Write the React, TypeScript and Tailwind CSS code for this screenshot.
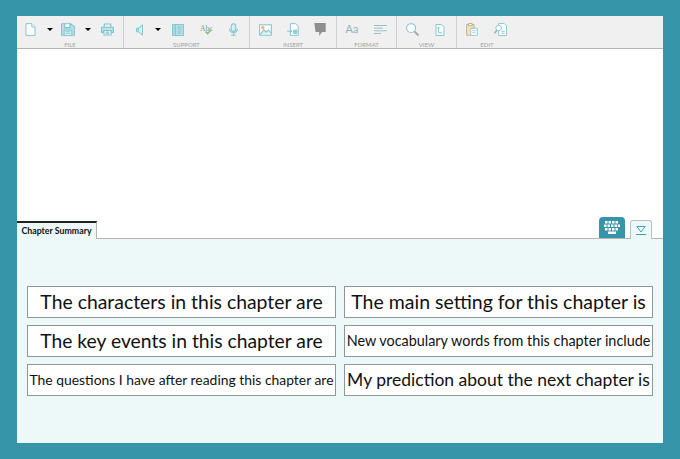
import React from 'react';

const line = '#7fc5d0';

function DocIcon() {
  return (
    <svg width="11" height="13" viewBox="0 0 16 20" fill="#fff" stroke={line} strokeWidth="1.5">
      <path d="M1 1h9l5 5v13H1z" />
      <path d="M10 1v5h5" />
    </svg>
  );
}

function SaveIcon() {
  return (
    <svg width="14" height="13" viewBox="0 0 22 20" fill="none" stroke={line} strokeWidth="1.7">
      <path d="M1 1h5v6h8V1h1l6 4.500V19H1z" fill="#bfe2e8" />
      <rect x="5" y="11" width="12" height="8" fill="#fff" />
      <path d="M7 13.500h8M7 16h8" />
      <path d="M6 1h8v6H6z" fill="#fff" />
    </svg>
  );
}

function PrintIcon() {
  return (
    <svg width="13" height="13" viewBox="0 0 20 20" fill="none" stroke={line} strokeWidth="1.8">
      <path d="M5 6V1.500h10V6" />
      <path d="M1 6.500h18v8h-3.500v-3h-11v3H1z" fill="#bfe2e8" />
      <path d="M4.500 11.500h11v7h-11z" fill="#fff" />
      <path d="M7 14h6M7 16.500h6" />
    </svg>
  );
}

function SpeakerIcon() {
  return (
    <svg width="9" height="12" viewBox="0 0 12 20" fill="#d8eef1" stroke={line} strokeWidth="1.6">
      <path d="M1 7h3v6H1z" />
      <path d="M4 7l7-5.500v17L4 13z" />
    </svg>
  );
}

function BookIcon() {
  return (
    <svg width="12" height="12" viewBox="0 0 20 20" fill="#bfe2e8" stroke={line} strokeWidth="1.7">
      <rect x="1" y="1" width="18" height="18" />
      <path d="M6 1v18" />
      <path d="M9 5h7M9 8.300h7M9 11.600h7M9 15h7M2.500 5h2M2.500 8.300h2M2.500 11.600h2M2.500 15h2" fill="none" />
    </svg>
  );
}

function SpellIcon() {
  return (
    <svg width="13" height="11" viewBox="0 0 13 11" fill="none">
      <text x="0" y="6.500" fontFamily="Liberation Serif, serif" fontSize="7.500" fill="#6f9ea3">Abc</text>
      <path d="M5.500 7.500l2 2 4-4" stroke="#86c46b" strokeWidth="1.600" />
    </svg>
  );
}

function MicIcon() {
  return (
    <svg width="9" height="13" viewBox="0 0 14 20" fill="#d8eef1" stroke={line} strokeWidth="1.6">
      <rect x="3.500" y="1" width="7" height="12" rx="3.500" />
      <path d="M1 9c0 8 12 8 12 0M7 15.500v3.500M3.500 19h7" fill="none" />
    </svg>
  );
}

function ImageIcon() {
  return (
    <svg width="13" height="12" viewBox="0 0 20 18" fill="#fff" stroke={line} strokeWidth="1.600">
      <rect x="1" y="1" width="18" height="16" />
      <path d="M1.500 16l6-7 4 3 3-3 4.500 5" fill="#d8eef1" />
      <circle cx="6" cy="5.500" r="1.800" fill="#f1d98a" stroke="#d9b95c" />
    </svg>
  );
}

function InsertIcon() {
  return (
    <svg width="12" height="13" viewBox="0 0 18 20" fill="#fff" stroke={line} strokeWidth="1.500">
      <path d="M5 1h8l4 4v14H5z" />
      <path d="M10 11h5v5h-5zM10 13.500h5M12.500 11v5" fill="#d8eef1" />
      <path d="M0 12.500h7M5 10.500l2 2-2 2" fill="none" />
    </svg>
  );
}

function CommentIcon() {
  return (
    <svg width="12" height="13" viewBox="0 0 14 16" fill="#8f8f8f">
      <path d="M0 0h14v11H9.500L6 16v-5H1.500z" />
    </svg>
  );
}

function LinesIcon() {
  return (
    <svg width="13" height="9" viewBox="0 0 13 9" fill="none" stroke="#9dc3c9" strokeWidth="1">
      <path d="M0 .5h13M0 3.200h9M0 5.800h13M0 8.500h7" />
    </svg>
  );
}

function SearchIcon() {
  return (
    <svg width="13" height="13" viewBox="0 0 14 14" fill="#fff" stroke={line} strokeWidth="1.100">
      <circle cx="5.500" cy="5.500" r="4.800" />
      <path d="M9 9l4.500 4.500" stroke="#a9a9a9" strokeWidth="2.100" />
    </svg>
  );
}

function PageIcon() {
  return (
    <svg width="10" height="12" viewBox="0 0 12 15" fill="#fff" stroke={line} strokeWidth="1.200">
      <path d="M1 .6h7l3 3v10.800H1z" />
      <path d="M4 4v7h5M2.500 5.500L4 4l1.500 1.500" fill="none" />
    </svg>
  );
}

function ClipboardIcon() {
  return (
    <svg width="12" height="13" viewBox="0 0 14 16" fill="#f3e2bd" stroke="#b7a67e" strokeWidth="1">
      <rect x=".5" y="2" width="9" height="13" />
      <rect x="3" y=".5" width="4" height="3" fill="#fff" />
      <path d="M5.500 6.500h8v9h-8z" fill="#fff" stroke={line} />
      <path d="M7.500 9.500h4M7.500 12h4" fill="none" stroke={line} />
    </svg>
  );
}

function ReplaceIcon() {
  return (
    <svg width="13" height="13" viewBox="0 0 14 14" fill="#fff" stroke={line} strokeWidth="1">
      <path d="M5 .5h6L13.500 3v10.500H5z" />
      <circle cx="5" cy="5.500" r="3" />
      <path d="M3 8L.5 11" stroke="#a9a9a9" strokeWidth="1.600" />
      <path d="M8 9h3.500M8 11h3.500" />
    </svg>
  );
}

function Caret() {
  return <span className="block w-0 h-0 border-x-[3px] border-x-transparent border-t-[3px] border-t-black" />;
}

function Slot({ className, children }: { className: string; children: React.ReactNode }) {
  return <div className={`flex items-center justify-center h-full ${className}`}>{children}</div>;
}

function Group({ label, className, children }: { label: string; className: string; children: React.ReactNode }) {
  return (
    <div className={`flex flex-col h-full border-r border-[#cfcfcf] ${className}`}>
      <div className="flex h-[26px] pt-[1px]">{children}</div>
      <div className="text-center text-[6px] leading-[6px] text-[#a3a3a3]">{label}</div>
    </div>
  );
}

function Prompt({ size, children }: { size: string; children: React.ReactNode }) {
  return (
    <div className={`h-[32px] flex items-center justify-center bg-white border border-[#8f9696] text-[#111] whitespace-nowrap ${size}`}>
      {children}
    </div>
  );
}

export default function App() {
  return (
    <div className="w-[680px] h-[459px] bg-[#3795aa] pt-[16px] px-[17px] overflow-hidden" style={{ fontFamily: 'Lato, "Open Sans", sans-serif' }}>
      <div className="w-[646px] h-[427px] flex flex-col bg-white">
        {/* Toolbar */}
        <div className="flex h-[33px] shrink-0 bg-[#f0f0f0] border-b border-[#b4b4b4]">
          <Group label="FILE" className="w-[107px]">
            <Slot className="w-[26px]"><DocIcon /></Slot>
            <Slot className="w-[14px]"><Caret /></Slot>
            <Slot className="w-[22px]"><SaveIcon /></Slot>
            <Slot className="w-[18px]"><Caret /></Slot>
            <Slot className="w-[20px]"><PrintIcon /></Slot>
          </Group>
          <Group label="SUPPORT" className="w-[126px]">
            <Slot className="w-[30px]"><SpeakerIcon /></Slot>
            <Slot className="w-[8px]"><Caret /></Slot>
            <Slot className="w-[32px]"><BookIcon /></Slot>
            <Slot className="w-[24px]"><SpellIcon /></Slot>
            <Slot className="w-[30px]"><MicIcon /></Slot>
          </Group>
          <Group label="INSERT" className="w-[87px]">
            <Slot className="w-[30px]"><ImageIcon /></Slot>
            <Slot className="w-[26px]"><InsertIcon /></Slot>
            <Slot className="w-[28px]"><CommentIcon /></Slot>
          </Group>
          <Group label="FORMAT" className="w-[60px]">
            <Slot className="w-[30px]"><span className="text-[11px] text-[#8fb4bb]">Aa</span></Slot>
            <Slot className="w-[26px]"><LinesIcon /></Slot>
          </Group>
          <Group label="VIEW" className="w-[60px]">
            <Slot className="w-[30px]"><SearchIcon /></Slot>
            <Slot className="w-[26px]"><PageIcon /></Slot>
          </Group>
          <div className="flex flex-col h-full w-[60px]">
            <div className="flex h-[26px] pt-[1px]">
              <Slot className="w-[30px]"><ClipboardIcon /></Slot>
              <Slot className="w-[26px]"><ReplaceIcon /></Slot>
            </div>
            <div className="text-center text-[6px] leading-[6px] text-[#a3a3a3]">EDIT</div>
          </div>
        </div>

        {/* Editor */}
        <div className="flex-1" />

        {/* Tab strip */}
        <div className="flex items-end h-[22px] shrink-0 border-b border-[#b4b4b4]">
          <div className="w-[80px] h-[18px] -mb-px flex items-center justify-center bg-[#ecf9f8] border-t-2 border-t-[#222] border-r border-r-[#b4b4b4] text-[8.800px] font-bold text-[#111]">
            Chapter Summary
          </div>
          <div className="flex-1" />
          <div className="w-[26px] h-[21px] flex items-center justify-center rounded-t-[4px] bg-[#3795aa]">
            <svg width="16" height="13" viewBox="0 0 16 13" fill="#fff">
              <path d="M1 0h2.500v2.500H1zM4.500 0H7v2.500H4.500zM8 0h2.500v2.500H8zM11.500 0H14v2.500h-2.500zM0 3.500h2.500V6H0zM3.500 3.500H6V6H3.500zM7 3.500h2.500V6H7zM10.500 3.500H13V6h-2.500zM13.800 3.500h2.200V6h-2.200zM1 7h2.500v2.500H1zM4.500 7H7v2.500H4.500zM8 7h2.500v2.500H8zM11.500 7H14v2.500h-2.500zM4 10.500h8V13H4z" />
            </svg>
          </div>
          <div className="w-[22px] h-[19px] ml-[5px] mr-[11px] -mb-px flex items-center justify-center bg-[#ecf9f8] border border-b-0 border-[#b4c4c6] rounded-t-[3px]">
            <svg width="10" height="9" viewBox="0 0 10 9" fill="none" stroke="#3f9fb3" strokeWidth="1">
              <path d="M.8.500h8.400L5 6z" />
              <path d="M0 8.500h10" />
            </svg>
          </div>
        </div>

        {/* Chapter summary prompts */}
        <div className="h-[204px] shrink-0 bg-[#ecf9f8] pt-[47px] px-[10px]">
          <div className="grid grid-cols-2 gap-x-[8px] gap-y-[7px]">
            <Prompt size="text-[19.400px]">The characters in this chapter are</Prompt>
            <Prompt size="text-[19.500px]">The main setting for this chapter is</Prompt>
            <Prompt size="text-[19.300px]">The key events in this chapter are</Prompt>
            <Prompt size="text-[14.400px]">New vocabulary words from this chapter include</Prompt>
            <Prompt size="text-[13.900px]">The questions I have after reading this chapter are</Prompt>
            <Prompt size="text-[17.500px]">My prediction about the next chapter is</Prompt>
          </div>
        </div>
      </div>
    </div>
  );
}
